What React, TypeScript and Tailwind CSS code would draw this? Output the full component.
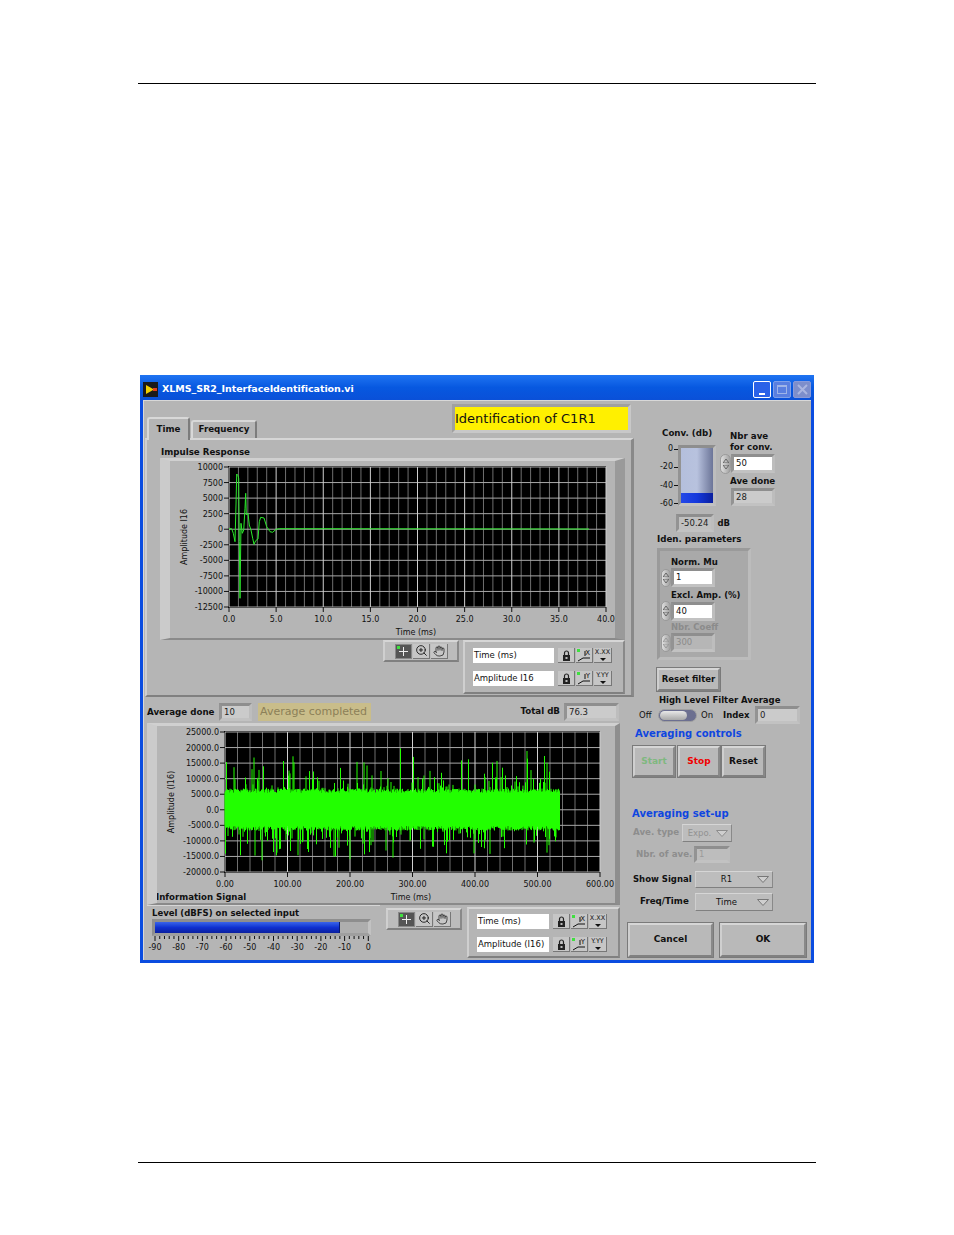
import React from 'react';
import { Hand, ZoomIn } from 'lucide-react';

const raised = 'border-t-[#d6d6d6] border-l-[#cfcfcf] border-b-[#808080] border-r-[#898989]';
const sunken = 'border-t-[#8e8e8e] border-l-[#939393] border-b-[#c2c2c2] border-r-[#bdbdbd]';

// fixed seed so the noise trace is the same on every load
let seed = 20231;
const rnd = () => {
  seed = (seed * 16807) % 2147483647;
  return seed / 2147483647;
};

const noisePath = (x0: number, x1: number, zero: number, perUnit: number) => {
  let d = '';
  for (let x = x0; x < x1; x += 0.5) {
    let hi = 5300 + rnd() * 1500;
    let lo = 5300 + rnd() * 1500;
    if (rnd() < 0.22) hi += rnd() * rnd() * 14000;
    if (rnd() < 0.22) lo += rnd() * rnd() * 12000;
    d += `M${x} ${(zero - hi * perUnit).toFixed(1)}V${(zero + lo * perUnit).toFixed(1)}`;
  }
  return d;
};

const impulse =
  '267,461 275,461 280,475 285,500 288,390 290,297 294,302 296,310 298,500 300,670 303,445 307,475 311,465 315,400 317,355 319,420 324,415 328,450 333,465 338,490 342,508 347,497 354,492 358,440 362,427 372,429 380,455 390,470 398,472 408,463 418,461'
    .split(' ')
    .map((p) => {
      const [a, b] = p.split(',').map(Number);
      return `${(140 + a / 3 - 170).toFixed(1)},${(375 + b / 3 - 461).toFixed(1)}`;
    })
    .join(' ') + ' 419,68';

function Led() {
  return <span className="absolute left-[1px] top-[1px] w-[3px] h-[3px] bg-[#3fe03f]" />;
}

function Palette({ className }: { className: string }) {
  return (
    <div className={`flex items-center gap-[1px] border-2 pl-[10px] bg-[#bcbcbc] ${raised} ${className}`}>
      <div className="relative w-[17px] h-[15px] bg-[#555] border border-[#888] flex items-center justify-center">
        <Led />
        <svg width="13" height="13" viewBox="0 0 13 13">
          <path d="M6.5 2V11M2 6.5H11" stroke="#eee" strokeWidth="1" />
        </svg>
      </div>
      <div className="w-[17px] h-[15px] bg-[#c6c6c6] border-b border-r border-[#777] flex items-center justify-center">
        <ZoomIn size={13} strokeWidth={1.6} color="#111" />
      </div>
      <div className="w-[17px] h-[15px] bg-[#c6c6c6] border-b border-r border-[#777] flex items-center justify-center">
        <Hand size={12} strokeWidth={1.4} color="#111" />
      </div>
    </div>
  );
}

function LegendRow({ label, axis, format, inputW, className = '' }: { label: string; axis: string; format: string; inputW: string; className?: string }) {
  return (
    <div className={`flex items-center h-[15px] ${className}`}>
      <div className={`h-[15px] bg-white pl-[1px] text-[8.5px] leading-[15px] text-[#111] whitespace-nowrap ${inputW}`}>{label}</div>
      <div className="ml-[4px] w-[17px] h-[15px] bg-[#c6c6c6] border-b border-r border-[#777] flex items-center justify-center">
        <svg width="9" height="11" viewBox="0 0 9 11">
          <path d="M2.5 5V3a2 2 0 0 1 4 0V5" fill="none" stroke="#222" strokeWidth="1.2" />
          <rect x="1" y="5" width="7" height="6" fill="#222" />
          <rect x="3.5" y="7" width="2" height="2" fill="#bbb" />
        </svg>
      </div>
      <div className="relative ml-[1px] w-[17px] h-[15px] bg-[#c6c6c6] border-b border-r border-[#777] text-[7px] leading-[10px] text-right pr-[2px] text-[#111]">
        <Led />
        {axis}
        <svg className="absolute left-[2px] top-[3px]" width="12" height="11" viewBox="0 0 12 11">
          <path d="M7 0V5M0 10L5 7H12" fill="none" stroke="#111" strokeWidth="1" />
        </svg>
      </div>
      <div className="relative ml-[1px] w-[18px] h-[15px] bg-[#c6c6c6] border-b border-r border-[#777] text-[6.5px] leading-[9px] text-center text-[#111]">
        {format}
        <svg className="absolute left-[6px] bottom-[1px]" width="6" height="3" viewBox="0 0 6 3">
          <path d="M0 0H6L3 3Z" fill="#111" />
        </svg>
      </div>
    </div>
  );
}

interface GraphProps {
  width: number;
  height: number;
  plot: { x: number; y: number; w: number; h: number };
  xLabels: string[];
  yLabels: string[];
  xMinor: number;
  title: string;
  titleX: number;
  titleY: number;
  yTitle: string;
  yTitleX: number;
  children?: React.ReactNode;
}

function Graph({ width, height, plot, xLabels, yLabels, xMinor, title, titleX, titleY, yTitle, yTitleX, children }: GraphProps) {
  const majorX = plot.w / (xLabels.length - 1);
  const majorY = plot.h / (yLabels.length - 1);
  const bottom = plot.y + plot.h;
  const xs = xLabels.map((_, i) => plot.x + i * majorX);
  const ys = yLabels.map((_, i) => plot.y + i * majorY);
  const minors: number[] = [];
  for (let i = 0; i < (xLabels.length - 1) * xMinor; i++) {
    if (i % xMinor) minors.push(plot.x + (i * majorX) / xMinor);
  }
  return (
    <svg width={width} height={height} className="block">
      <rect x={plot.x - 1} y={plot.y - 1} width={plot.w + 1} height={plot.h + 2} fill="#000" />
      {minors.map((x) => (
        <line key={x} x1={x} x2={x} y1={plot.y} y2={bottom} stroke="#6f6f6f" strokeWidth="1" />
      ))}
      {ys.map((y) => (
        <line key={y} x1={plot.x} x2={plot.x + plot.w} y1={y} y2={y} stroke="#a8a8a8" strokeWidth="1" />
      ))}
      {xs.map((x) => (
        <g key={x}>
          <line x1={x} x2={x} y1={plot.y} y2={bottom} stroke="#d0d0d0" strokeWidth="1" />
          <line x1={x} x2={x} y1={bottom} y2={bottom + 5} stroke="#111" strokeWidth="1" />
        </g>
      ))}
      {ys.map((y) => (
        <line key={y} x1={plot.x - 5} x2={plot.x} y1={y} y2={y} stroke="#111" strokeWidth="1" />
      ))}
      {children}
      {xLabels.map((t, i) => (
        <text key={t} x={xs[i]} y={bottom + 15} fontSize="8" textAnchor="middle" fill="#111">
          {t}
        </text>
      ))}
      {yLabels.map((t, i) => (
        <text key={t} x={plot.x - 6} y={ys[i] + 3} fontSize="8" textAnchor="end" fill="#111">
          {t}
        </text>
      ))}
      <text x={titleX} y={titleY} fontSize="8" textAnchor="middle" fill="#111">
        {title}
      </text>
      <text transform={`translate(${yTitleX} ${plot.y + plot.h / 2}) rotate(-90)`} fontSize="8" textAnchor="middle" fill="#111">
        {yTitle}
      </text>
    </svg>
  );
}

function Readout({ value, className, inner = 'bg-[#cbcbcb]', text = 'text-[#222]' }: { value: string; className: string; inner?: string; text?: string }) {
  return (
    <div className={`border-[3px] ${sunken} ${className}`}>
      <div className={`h-full pl-[2px] flex items-center text-[8.5px] ${inner} ${text}`}>{value}</div>
    </div>
  );
}

function Spinner({ className, disabled = false }: { className: string; disabled?: boolean }) {
  const c = disabled ? '#999' : '#666';
  return (
    <div className={`flex flex-col items-center justify-center gap-[2px] rounded-full bg-gradient-to-r from-[#e0e0e0] to-[#a0a0a0] border border-[#9a9a9a] shrink-0 ${className}`}>
      <svg width="6" height="4" viewBox="0 0 6 4">
        <path d="M3 0L6 4H0Z" fill="none" stroke={c} />
      </svg>
      <svg width="6" height="4" viewBox="0 0 6 4">
        <path d="M0 0H6L3 4Z" fill="none" stroke={c} />
      </svg>
    </div>
  );
}

function Dropdown({ value, className, disabled = false }: { value: string; className: string; disabled?: boolean }) {
  return (
    <div className={`flex items-center border ${raised} bg-[#bdbdbd] text-[8.5px] ${disabled ? 'text-[#919191]' : 'text-[#111]'} ${className}`}>
      <span className="flex-1 text-center">{value}</span>
      <svg className="mr-[3px]" width="12" height="7" viewBox="0 0 12 7">
        <path d="M0.5 0.5H11.5L6 6.5Z" fill="#cfcfcf" stroke={disabled ? '#8c8c8c' : '#777'} />
      </svg>
    </div>
  );
}

function Btn({ label, className }: { label: string; className: string }) {
  return (
    <div className={`flex items-center justify-center border-2 ${raised} bg-[#b9b9b9] font-bold shadow-[0_0_0_1px_#7a7a7a] ${className}`}>
      {label}
    </div>
  );
}

function SpinField({ value, disabled = false, spinner, h }: { value: string; disabled?: boolean; spinner: string; h: string }) {
  return (
    <div className={`flex items-center pl-[1px] ${h}`}>
      <Spinner className={spinner} disabled={disabled} />
      <Readout
        value={value}
        className="w-[44px] h-[19px]"
        inner={disabled ? 'bg-[#b6b6b6]' : 'bg-white'}
        text={disabled ? 'text-[#8b8b8b]' : 'text-[#111]'}
      />
    </div>
  );
}

export default function App() {
  const topPlot = { x: 59, y: 6, w: 377, h: 140 };
  const bottomPlot = { x: 68, y: 6, w: 375, h: 140 };

  return (
    <div className="min-h-[1235px] bg-white font-['DejaVu_Sans',sans-serif] text-[#111] overflow-hidden">
      <div className="ml-[138px] mt-[83px] w-[678px] h-px bg-black" />

      <div className="ml-[140px] mt-[291px] w-[674px] h-[588px] bg-[#0a4ce0] flex flex-col">
        {/* title bar */}
        <div className="h-[25px] shrink-0 flex items-center pl-[3px] pr-[3px] pt-[4px] bg-gradient-to-b from-[#1f74f2] via-[#0758e0] to-[#0a50d8]">
          <svg width="15" height="15" viewBox="0 0 15 15">
            <rect width="15" height="15" fill="#1a1a1a" />
            <path d="M3 3L11 7.5L3 12Z" fill="#f2d000" />
            <rect x="10" y="6" width="4" height="3" fill="#e04020" />
          </svg>
          <span className="ml-[4px] text-white font-bold text-[9.5px] tracking-[-0.05px] whitespace-nowrap">XLMS_SR2_InterfaceIdentification.vi</span>
          <div className="ml-auto flex gap-[2px]">
            <div className="w-[18px] h-[17px] rounded-[2px] border border-white bg-[#2a62e8] flex items-end justify-center pb-[2px]">
              <span className="w-[6px] h-[2px] bg-white" />
            </div>
            <div className="w-[18px] h-[17px] rounded-[2px] border border-[#7f9fe8] bg-[#5a7fe0] flex items-center justify-center">
              <span className="w-[10px] h-[9px] border border-[#9fb4e8] border-t-2" />
            </div>
            <div className="w-[18px] h-[17px] rounded-[2px] border border-[#8a9ad8] bg-[#7d8ecb] flex items-center justify-center">
              <svg width="11" height="11" viewBox="0 0 11 11">
                <path d="M1 1L10 10M10 1L1 10" stroke="#aab6e0" strokeWidth="2" />
              </svg>
            </div>
          </div>
        </div>

        {/* panel */}
        <div className="mx-[3px] h-[560px] bg-[#b5b5b5] flex border-t border-l border-[#d8d8d8] text-[8.7px]">
          {/* left column */}
          <div className="w-[490px] shrink-0 pl-[1px] flex flex-col">
            <div className="h-[37px] shrink-0 flex items-end justify-between">
              <div className="flex items-end ml-[2px] relative z-10 -mb-[2px]">
                <div className="w-[43px] h-[23px] rounded-t-[3px] bg-[#b5b5b5] border-t-2 border-l-2 border-r-2 border-t-[#d8d8d8] border-l-[#d8d8d8] border-r-[#7c7c7c] flex items-center justify-center font-bold">
                  Time
                </div>
                <div className="ml-[1px] mb-[2px] w-[66px] h-[18px] rounded-t-[3px] bg-[#b5b5b5] border-t-2 border-l-2 border-r-2 border-t-[#d8d8d8] border-l-[#d8d8d8] border-r-[#7c7c7c] flex items-center justify-center font-bold">
                  Frequency
                </div>
              </div>
              <div className="mb-[5px] mr-[3px] w-[179px] h-[29px] border-[3px] border-t-[#a0a0a0] border-l-[#a0a0a0] border-b-[#c8c8c8] border-r-[#c8c8c8] bg-[#fff000] flex items-center text-[13px] whitespace-nowrap">
                Identification of C1R1
              </div>
            </div>

            <div className={`w-[489px] h-[259px] shrink-0 border-t-2 border-l-2 border-r-[3px] border-b-2 ${raised}`}>
              <div className="pl-[14px] pt-[6px] h-[18px] leading-[12px] font-bold">Impulse Response</div>
              <div className="ml-[13px] w-[465px] h-[182px] border-l-[10px] border-r-[10px] border-t-[3px] border-b-[2px] border-l-[#cbcbcb] border-t-[#d0d0d0] border-r-[#9a9a9a] border-b-[#8a8a8a]">
                <Graph
                  width={445}
                  height={177}
                  plot={topPlot}
                  xLabels={['0.0', '5.0', '10.0', '15.0', '20.0', '25.0', '30.0', '35.0', '40.0']}
                  yLabels={['10000', '7500', '5000', '2500', '0', '-2500', '-5000', '-7500', '-10000', '-12500']}
                  xMinor={5}
                  title="Time (ms)"
                  titleX={246}
                  titleY={174}
                  yTitle="Amplitude I16"
                  yTitleX={17}
                >
                  <polyline points={impulse} fill="none" stroke="#2bea2b" strokeWidth="1" />
                </Graph>
              </div>
              <div className="flex items-start ml-[236px]">
                <Palette className="w-[76px] h-[22px]" />
                <div className={`ml-[4px] w-[162px] h-[54px] border-2 pl-[8px] pt-[6px] ${raised}`}>
                  <LegendRow label="Time (ms)" axis="X" format="X.XX" inputW="w-[81px]" />
                  <LegendRow label="Amplitude I16" axis="Y" format="Y.YY" inputW="w-[81px]" className="mt-[8px]" />
                </div>
              </div>
            </div>

            <div className="h-[26px] shrink-0 flex items-center pl-[2px] pt-[4px]">
              <span className="font-bold w-[69px] mt-[2px] whitespace-nowrap">Average done</span>
              <Readout value="10" className="w-[33px] h-[18px] ml-[3px]" />
              <div className="ml-[6px] w-[113px] h-[18px] bg-[#c9bd8a] text-[#8c8058] text-[11px] leading-[18px] pl-[2px] whitespace-nowrap">
                Average completed
              </div>
              <span className="ml-auto font-bold">Total dB</span>
              <Readout value="76.3" className="w-[55px] h-[18px] ml-[4px] mr-[15px]" />
            </div>

            <div className="ml-[2px] w-[473px] h-[182px] shrink-0 border-l-[10px] border-r-[5px] border-t-[3px] border-b-[2px] border-l-[#cbcbcb] border-t-[#d0d0d0] border-r-[#8e8e8e] border-b-[#8a8a8a]">
              <Graph
                width={458}
                height={177}
                plot={bottomPlot}
                xLabels={['0.00', '100.00', '200.00', '300.00', '400.00', '500.00', '600.00']}
                yLabels={['25000.0', '20000.0', '15000.0', '10000.0', '5000.0', '0.0', '-5000.0', '-10000.0', '-15000.0', '-20000.0']}
                xMinor={5}
                title="Time (ms)"
                titleX={254}
                titleY={174}
                yTitle="Amplitude (I16)"
                yTitleX={17}
              >
                <path d={noisePath(68, 403, 83.5, 3.09 / 1000)} stroke="#22ff00" strokeWidth="1" fill="none" />
                <text x={-1} y={174} fontSize="8.6" fontWeight="700" fill="#111">
                  Information Signal
                </text>
              </Graph>
            </div>

            <div className="flex items-start">
              <div className={`ml-[2px] w-[233px] h-[54px] border-t ${raised} pl-[5px]`}>
                <div className="h-[13px] pt-[1px] leading-[12px] font-bold text-[8.5px] whitespace-nowrap">Level (dBFS) on selected input</div>
                <div className="w-[219px] h-[17px] border-[3px] border-t-[#8e8e8e] border-l-[#8e8e8e] border-b-[#9f9f9f] border-r-[#c2c2c2] bg-[#aeaeae]">
                  <div className="w-[185px] h-full bg-gradient-to-b from-[#3a63ea] via-[#1030d0] to-[#0a1f9f] border-r border-[#061a70]" />
                </div>
                <svg width="225" height="18" className="block overflow-visible">
                  {Array.from({ length: 46 }, (_, i) => (
                    <line key={i} x1={3 + i * 4.74} x2={3 + i * 4.74} y1={0} y2={i % 5 ? 3 : 5} stroke="#111" />
                  ))}
                  {['-90', '-80', '-70', '-60', '-50', '-40', '-30', '-20', '-10', '0'].map((t, i) => (
                    <text key={t} x={3 + i * 23.7} y={14} fontSize="8" textAnchor="middle" fill="#111">
                      {t}
                    </text>
                  ))}
                </svg>
              </div>
              <Palette className="ml-[6px] mt-[3px] w-[76px] h-[22px]" />
              <div className={`ml-[5px] mt-[2px] w-[153px] h-[51px] border-2 pl-[8px] pt-[5px] ${raised}`}>
                <LegendRow label="Time (ms)" axis="X" format="X.XX" inputW="w-[72px]" />
                <LegendRow label="Amplitude (I16)" axis="Y" format="Y.YY" inputW="w-[72px]" className="mt-[8px]" />
              </div>
            </div>
          </div>

          {/* right column */}
          <div className="flex-1 flex flex-col -ml-[1px]">
            <div className="flex pt-[26px] ml-[25px]">
              <div className="w-[72px]">
                <div className="h-[12px] leading-[12px] pl-[4px] font-bold whitespace-nowrap">Conv. (db)</div>
                <div className="flex mt-[6px]">
                  <div className="w-[20px] h-[67px] -mt-[2px] flex flex-col justify-between items-end text-[8px] leading-[12px]">
                    {['0', '-20', '-40', '-60'].map((t) => (
                      <div key={t} className="flex items-center gap-[1px]">
                        {t}
                        <span className="w-[4px] h-px bg-[#111]" />
                      </div>
                    ))}
                  </div>
                  <div className={`w-[38px] h-[61px] border-[3px] ${sunken} flex flex-col`}>
                    <div className="flex-1 bg-gradient-to-r from-[#b4bfdc] via-[#b8c2de] to-[#6c7598]" />
                    <div className="h-[10px] bg-gradient-to-r from-[#2448e8] via-[#1438dc] to-[#0a1f9f]" />
                  </div>
                </div>
                <div className="flex items-center mt-[4px] ml-[18px]">
                  <Readout value="-50.24" className="w-[40px] h-[18px]" inner="bg-[#c0c0c0]" />
                  <span className="ml-[3px] font-bold text-[8.5px]">dB</span>
                </div>
              </div>
              <div className="pt-[4px] w-[66px]">
                <div className="leading-[11px] font-bold whitespace-nowrap">
                  Nbr ave
                  <br />
                  for conv.
                </div>
                <div className="flex items-center h-[21px] -ml-[10px]">
                  <Spinner className="w-[11px] h-[20px]" />
                  <Readout value="50" className="w-[44px] h-[19px]" inner="bg-white" text="text-[#111]" />
                </div>
                <div className="mt-[1px] h-[12px] leading-[12px] font-bold whitespace-nowrap">Ave done</div>
                <Readout value="28" className="w-[44px] h-[18px] ml-[1px] mt-[1px]" />
              </div>
            </div>

            <div className="ml-[24px] mt-[1px] h-[12px] leading-[12px] font-bold whitespace-nowrap">Iden. parameters</div>
            <div className="ml-[24px] mt-[3px] w-[94px] h-[112px] border-[3px] border-t-[#9a9a9a] border-l-[#9a9a9a] border-b-[#bcbcbc] border-r-[#bcbcbc] bg-[#a9a9a9]">
              <div className="pl-[11px] mt-[5px] h-[12px] leading-[12px] font-bold text-[8.5px] whitespace-nowrap">Norm. Mu</div>
              <SpinField value="1" spinner="w-[10px] h-[18px]" h="h-[19px]" />
              <div className="pl-[11px] mt-[2px] h-[12px] leading-[12px] font-bold text-[8.5px] whitespace-nowrap">Excl. Amp. (%)</div>
              <SpinField value="40" spinner="w-[10px] h-[20px]" h="h-[20px]" />
              <div className="pl-[11px] h-[12px] leading-[12px] font-bold text-[8.5px] text-[#8b8b8b] whitespace-nowrap">Nbr. Coeff</div>
              <SpinField value="300" disabled spinner="w-[10px] h-[18px]" h="h-[19px]" />
            </div>

            <Btn label="Reset filter" className="ml-[24px] mt-[8px] w-[63px] h-[23px] shrink-0 text-[8.5px]" />
            <div className="ml-[26px] mt-[3px] h-[12px] leading-[12px] font-bold text-[8.5px] whitespace-nowrap">High Level Filter Average</div>
            <div className="ml-[6px] h-[18px] flex items-center text-[8.5px]">
              <span className="w-[19px]">Off</span>
              <div className="w-[39px] h-[13px] rounded-full bg-[#6c6f90] flex items-center pl-[1px] border border-[#a0a0a0]">
                <span className="w-[27px] h-[9px] rounded-full bg-gradient-to-b from-[#e8e8e8] to-[#a8a8a8]" />
              </div>
              <span className="ml-[4px] w-[18px]">On</span>
              <span className="ml-[4px] w-[32px] font-bold">Index</span>
              <Readout value="0" className="w-[45px] h-[18px]" />
            </div>
            <div className="ml-[2px] mt-[3px] h-[13px] leading-[13px] font-semibold text-[10px] text-[#0f46e0] whitespace-nowrap">Averaging controls</div>
            <div className="flex mt-[6px] h-[31px] shrink-0 text-[9px]">
              <Btn label="Start" className="w-[42px] h-[31px] text-[#7fb87f]" />
              <Btn label="Stop" className="ml-[3px] w-[42px] h-[31px] text-[#f00000]" />
              <Btn label="Reset" className="ml-[2px] w-[43px] h-[31px]" />
            </div>
            <div className="-ml-[1px] mt-[30px] h-[13px] leading-[13px] font-bold text-[10px] text-[#0f46e0] whitespace-nowrap">Averaging set-up</div>
            <div className="flex items-center mt-[4px] h-[18px] shrink-0">
              <span className="font-bold text-[#8d8d8d] w-[49px] whitespace-nowrap">Ave. type</span>
              <Dropdown value="Expo." disabled className="w-[50px] h-[18px]" />
            </div>
            <div className="flex items-center mt-[4px] h-[17px] shrink-0 pl-[3px]">
              <span className="font-bold text-[#8d8d8d] w-[58px] whitespace-nowrap">Nbr. of ave.</span>
              <Readout value="1" className="w-[36px] h-[17px]" inner="bg-[#bdbdbd]" text="text-[#9a9a9a]" />
            </div>
            <div className="flex items-center mt-[8px] h-[17px] shrink-0">
              <span className="font-bold w-[62px] text-[8.5px] whitespace-nowrap">Show Signal</span>
              <Dropdown value="R1" className="w-[78px] h-[17px]" />
            </div>
            <div className="flex items-center mt-[5px] h-[18px] shrink-0 pl-[7px]">
              <span className="font-bold w-[55px] whitespace-nowrap">Freq/Time</span>
              <Dropdown value="Time" className="w-[78px] h-[18px]" />
            </div>
            <div className="flex -ml-[5px] mt-[12px]">
              <Btn label="Cancel" className="w-[85px] h-[34px] font-semibold text-[9px]" />
              <Btn label="OK" className="ml-[7px] w-[86px] h-[34px] text-[9px]" />
            </div>
          </div>
        </div>
      </div>

      <div className="ml-[138px] mt-[199px] w-[678px] h-px bg-black" />
    </div>
  );
}
